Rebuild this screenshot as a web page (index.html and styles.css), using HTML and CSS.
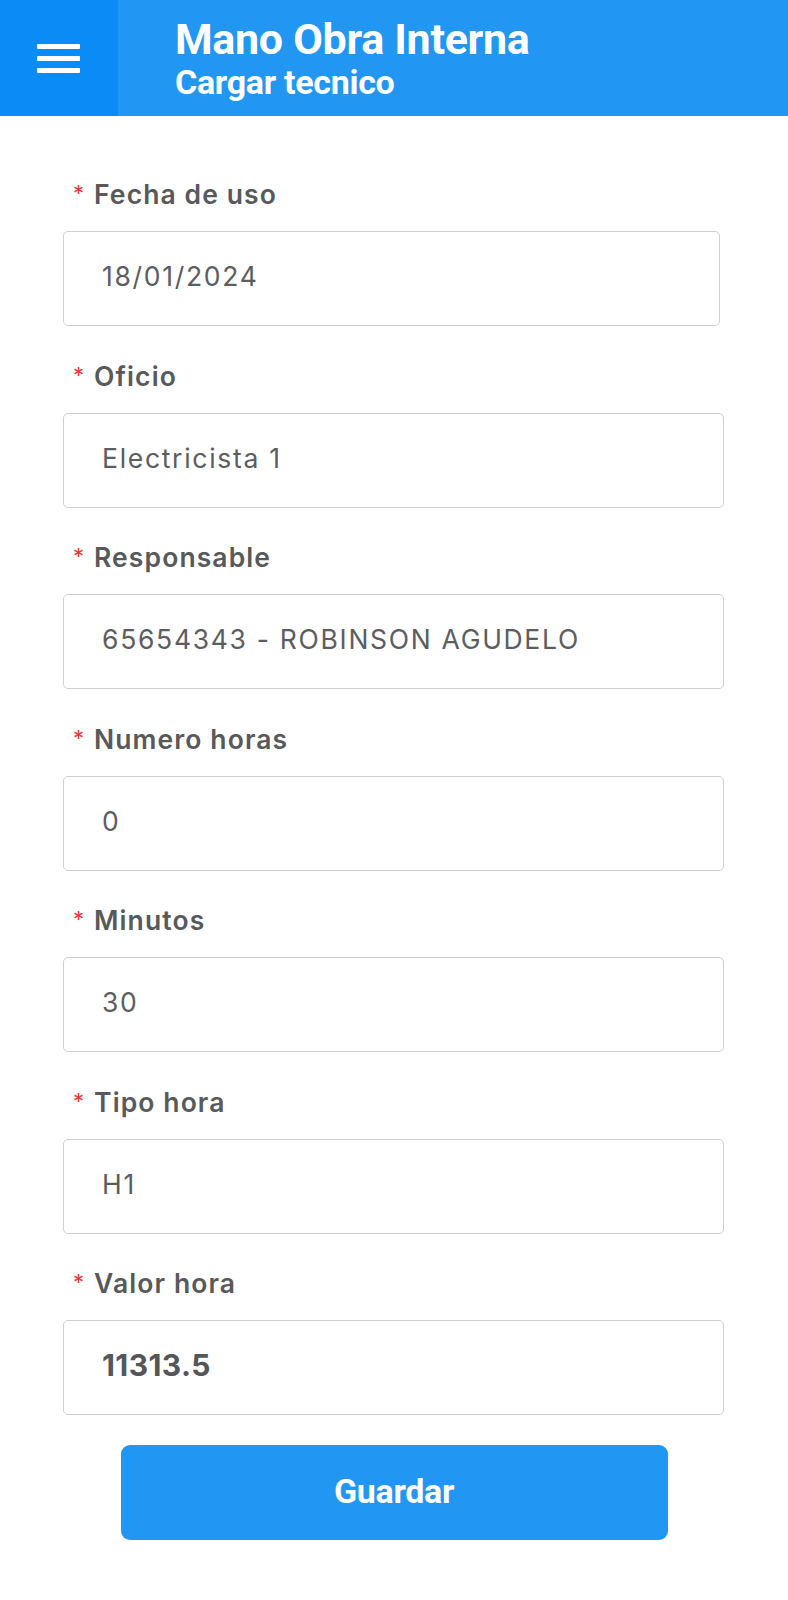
FILE: index.html
```html
<!DOCTYPE html>
<html lang="es">
<head>
<meta charset="utf-8">
<title>Mano Obra Interna</title>
<link rel="stylesheet" href="styles.css">
</head>
<body>
<header class="topbar">
  <div class="menu-btn">
    <svg width="44" height="30" viewBox="0 0 44 30" aria-hidden="true">
      <rect x="0" y="0" width="43" height="5" rx="1" fill="#fff"/>
      <rect x="0" y="12" width="43" height="5" rx="1" fill="#fff"/>
      <rect x="0" y="24" width="43" height="5" rx="1" fill="#fff"/>
    </svg>
  </div>
  <div class="titles">
    <div class="title">Mano Obra Interna</div>
    <div class="subtitle">Cargar tecnico</div>
  </div>
</header>
<main class="form">
  <div class="field">
    <div class="label"><span class="req">*</span>Fecha de uso</div>
    <div class="input short">18/01/2024</div>
  </div>
  <div class="field">
    <div class="label"><span class="req">*</span>Oficio</div>
    <div class="input">Electricista 1</div>
  </div>
  <div class="field">
    <div class="label"><span class="req">*</span>Responsable</div>
    <div class="input">65654343 - ROBINSON AGUDELO</div>
  </div>
  <div class="field">
    <div class="label"><span class="req">*</span>Numero horas</div>
    <div class="input">0</div>
  </div>
  <div class="field">
    <div class="label"><span class="req">*</span>Minutos</div>
    <div class="input">30</div>
  </div>
  <div class="field">
    <div class="label"><span class="req">*</span>Tipo hora</div>
    <div class="input">H1</div>
  </div>
  <div class="field">
    <div class="label"><span class="req">*</span>Valor hora</div>
    <div class="input strong">11313.5</div>
  </div>
  <div class="actions">
    <button class="save" type="button">Guardar</button>
  </div>
</main>
</body>
</html>
```
FILE: styles.css
```css
* { box-sizing: border-box; }
html, body { margin: 0; padding: 0; background: #fff; }
body { width: 788px; font-family: Roboto, "Liberation Sans", sans-serif; }

.topbar {
  display: flex;
  height: 116px;
  background: #2196f3;
}
.menu-btn {
  width: 118px;
  background: #0b8bf5;
  display: flex;
  align-items: center;
  justify-content: center;
}
.menu-btn svg { display: block; margin-left: -1px; margin-top: 1px; }
.titles {
  padding-left: 57px;
  padding-top: 14px;
  color: #fff;
  font-weight: 700;
}
.title { font-size: 43px; line-height: 50px; letter-spacing: -0.3px; }
.subtitle { font-size: 34px; line-height: 36px; letter-spacing: -0.3px; }

.form {
  padding: 60px 0 40px 63px;
}
.field { width: 661px; margin-bottom: 31.5px; }
.label {
  height: 36px;
  line-height: 36px;
  margin-bottom: 19px;
  padding-left: 10px;
  font-family: Inter, "Noto Sans", sans-serif;
  font-weight: 600;
  font-size: 26.5px;
  letter-spacing: 1.1px;
  color: #58595b;
}
.req {
  color: #e2383f;
  font-weight: 400;
  font-size: 22px;
  letter-spacing: 0;
  margin-right: 10px;
  position: relative;
  top: -3px;
}
.input {
  height: 95px;
  border: 1px solid #cfcfd1;
  border-radius: 5px;
  display: flex;
  align-items: center;
  padding: 0 0 5px 38px;
  font-family: Inter, "Noto Sans", sans-serif;
  font-size: 26.5px;
  letter-spacing: 1.7px;
  color: #5c5d60;
}
.input.short { width: 657px; }
.input.strong { font-weight: 700; font-size: 30px; letter-spacing: 0.4px; color: #55565a; }

.actions {
  width: 661px;
  display: flex;
  justify-content: center;
  margin-top: -2px;
  padding-left: 1px;
}
.save {
  width: 547px;
  height: 95px;
  border: 0;
  border-radius: 9px;
  background: #2196f3;
  color: #fff;
  font-family: Roboto, "Liberation Sans", sans-serif;
  font-weight: 700;
  font-size: 34px;
  letter-spacing: -0.3px;
  padding: 0 0 2px;
}
```
